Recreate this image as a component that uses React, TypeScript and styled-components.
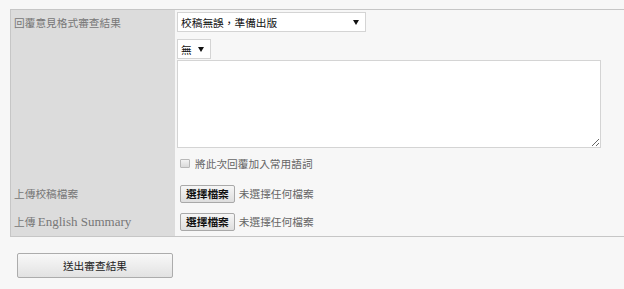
import React, { useState } from "react";
import styled, { createGlobalStyle } from "styled-components";

const GlobalStyle = createGlobalStyle`
  html, body {
    margin: 0;
    padding: 0;
    background: #f7f7f7;
    overflow: hidden;
  }
  body {
    font-family: "Noto Sans CJK TC", sans-serif;
    font-size: 10.7px;
  }
`;

const Page = styled.div`
  padding: 9px 0 0 10px;
`;

const Form = styled.div`
  display: grid;
  grid-template-columns: 164px 1fr;
  width: 640px;
  border-top: 1px solid #c6c6c6;
  border-bottom: 1px solid #c6c6c6;
  border-left: 1px solid #c6c6c6;
`;

const Label = styled.div<{ $top?: boolean }>`
  background: #dcdcdc;
  color: #777;
  font-family: "Noto Sans CJK TC", sans-serif;
  font-size: 10.7px;
  line-height: 20px;
  padding: ${(p) => (p.$top ? "3px 0 0 3px" : "0 0 0 3px")};
  display: flex;
  align-items: ${(p) => (p.$top ? "flex-start" : "center")};
  white-space: pre;
`;

const Latin = styled.span`
  font-family: "Liberation Serif", serif;
  font-size: 13px;
`;

const Cell = styled.div<{ $h?: number }>`
  padding: 0 0 0 2px;
  display: flex;
  flex-direction: column;
  align-items: flex-start;
  justify-content: center;
  ${(p) => (p.$h ? `height: ${p.$h}px;` : "")}
`;

const TopCell = styled(Cell)`
  justify-content: flex-start;
  padding-top: 2px;
`;

const SelectWrap = styled.div<{ $w: number; $mt?: number }>`
  position: relative;
  width: ${(p) => p.$w}px;
  height: 20px;
  margin-top: ${(p) => p.$mt ?? 0}px;
  &::after {
    content: "";
    position: absolute;
    right: 7px;
    top: 8px;
    border-left: 3px solid transparent;
    border-right: 3px solid transparent;
    border-top: 5px solid #111;
    pointer-events: none;
  }
`;

const Select = styled.select`
  appearance: none;
  width: 100%;
  height: 100%;
  box-sizing: border-box;
  margin: 0;
  padding: 0 0 0 3px;
  border: 1px solid #d4d4d4;
  border-radius: 0;
  background: #fff;
  color: #111;
  font-family: "Noto Sans CJK TC", sans-serif;
  font-size: 10.7px;
  outline: none;
`;

const TextArea = styled.textarea`
  width: 424px;
  height: 88px;
  box-sizing: border-box;
  margin: 1px 0 0 0;
  border: 1px solid #d4d4d4;
  background: #fff;
  font-family: "Noto Sans CJK TC", sans-serif;
  font-size: 10.7px;
  outline: none;
`;

const CheckRow = styled.label`
  display: flex;
  align-items: center;
  height: 31px;
  padding-left: 3px;
  color: #666;
  line-height: 14px;
`;

const Check = styled.input`
  appearance: none;
  width: 10px;
  height: 9px;
  margin: 0 5px 1px 0;
  border: 1px solid #b8b8b8;
  border-radius: 1px;
  background: linear-gradient(#f2f2f2, #dadada);
`;

const FileRow = styled.div`
  display: flex;
  align-items: center;
  gap: 4px;
  padding-left: 3px;
  color: #666;
  line-height: 14px;
`;

const FileButton = styled.button`
  height: 18px;
  box-sizing: border-box;
  padding: 0 5px;
  border: 1px solid #a9a9a9;
  border-radius: 2px;
  background: linear-gradient(#f6f6f6, #dedede);
  color: #111;
  font-family: "Noto Sans CJK TC", sans-serif;
  font-size: 10.7px;
  font-weight: bold;
  line-height: 16px;
  cursor: pointer;
`;

const Submit = styled.button`
  display: block;
  margin: 16px 0 0 7px;
  width: 156px;
  height: 25px;
  border: 1px solid #acacac;
  border-radius: 2px;
  background: linear-gradient(#f8f8f8, #e2e2e2);
  color: #222;
  font-family: "Noto Sans CJK TC", sans-serif;
  font-size: 10.7px;
  cursor: pointer;
`;

function FilePicker() {
  const [name, setName] = useState("未選擇任何檔案");
  return (
    <FileRow>
      <FileButton type="button" onClick={() => setName("未選擇任何檔案")}>
        選擇檔案
      </FileButton>
      <span>{name}</span>
    </FileRow>
  );
}

export default function App() {
  const [result, setResult] = useState("ok");
  const [phrase, setPhrase] = useState("none");
  return (
    <Page>
      <GlobalStyle />
      <Form>
        <Label $top>回覆意見格式審查結果</Label>
        <TopCell>
          <SelectWrap $w={189}>
            <Select value={result} onChange={(e) => setResult(e.target.value)}>
              <option value="ok">校稿無誤，準備出版</option>
              <option value="fix">需修改</option>
            </Select>
          </SelectWrap>
          <SelectWrap $w={34} $mt={7}>
            <Select value={phrase} onChange={(e) => setPhrase(e.target.value)}>
              <option value="none">無</option>
            </Select>
          </SelectWrap>
          <TextArea />
          <CheckRow>
            <Check type="checkbox" />
            將此次回覆加入常用語詞
          </CheckRow>
        </TopCell>
        <Label>上傳校稿檔案</Label>
        <Cell $h={29}>
          <FilePicker />
        </Cell>
        <Label>
          上傳 <Latin>English Summary</Latin>
        </Label>
        <Cell $h={28}>
          <FilePicker />
        </Cell>
      </Form>
      <Submit type="button">送出審查結果</Submit>
    </Page>
  );
}
